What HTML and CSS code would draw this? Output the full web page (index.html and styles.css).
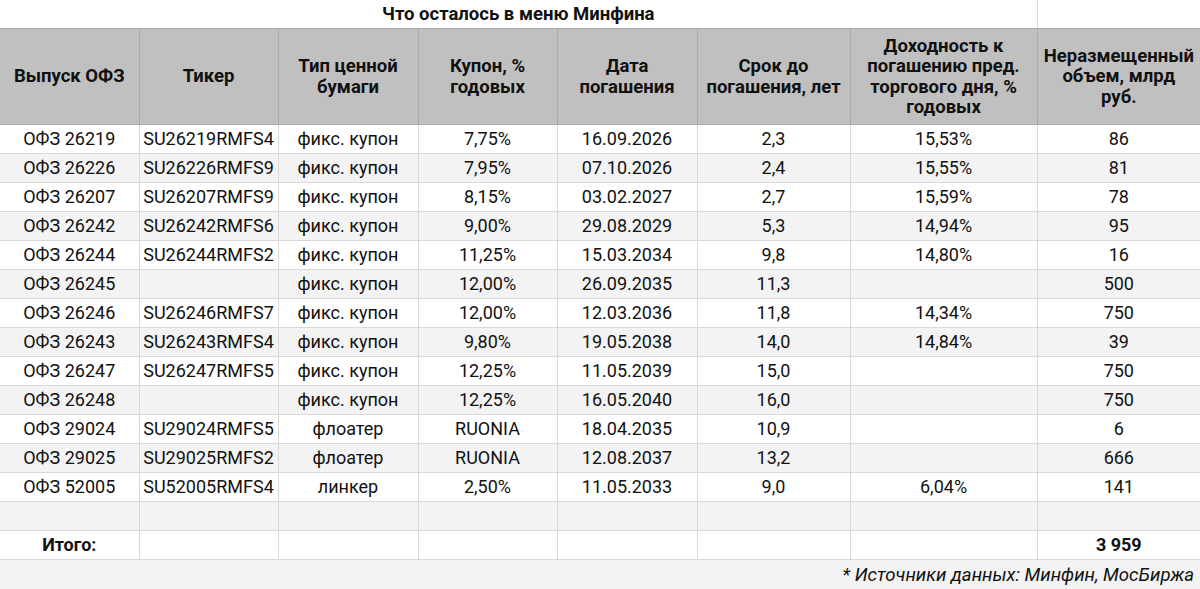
FILE: index.html
```html
<!DOCTYPE html>
<html lang="ru">
<head>
<meta charset="utf-8">
<title>Что осталось в меню Минфина</title>
<link rel="stylesheet" href="styles.css">
</head>
<body>
<table class="sheet">
  <colgroup>
    <col class="c1"><col class="c2"><col class="c3"><col class="c4">
    <col class="c5"><col class="c6"><col class="c7"><col class="c8">
  </colgroup>
  <tr class="title-row">
    <td colspan="7" class="title">Что осталось в меню Минфина</td>
    <td class="title-end"></td>
  </tr>
  <tr class="head">
    <th>Выпуск ОФЗ</th>
    <th>Тикер</th>
    <th>Тип ценной бумаги</th>
    <th>Купон, % годовых</th>
    <th>Дата погашения</th>
    <th>Срок до погашения, лет</th>
    <th>Доходность к погашению пред. торгового дня, % годовых</th>
    <th>Неразмещенный объем, млрд<br>руб.</th>
  </tr>
  <tr><td>ОФЗ 26219</td><td>SU26219RMFS4</td><td>фикс. купон</td><td>7,75%</td><td>16.09.2026</td><td>2,3</td><td>15,53%</td><td>86</td></tr>
  <tr class="alt"><td>ОФЗ 26226</td><td>SU26226RMFS9</td><td>фикс. купон</td><td>7,95%</td><td>07.10.2026</td><td>2,4</td><td>15,55%</td><td>81</td></tr>
  <tr><td>ОФЗ 26207</td><td>SU26207RMFS9</td><td>фикс. купон</td><td>8,15%</td><td>03.02.2027</td><td>2,7</td><td>15,59%</td><td>78</td></tr>
  <tr class="alt"><td>ОФЗ 26242</td><td>SU26242RMFS6</td><td>фикс. купон</td><td>9,00%</td><td>29.08.2029</td><td>5,3</td><td>14,94%</td><td>95</td></tr>
  <tr><td>ОФЗ 26244</td><td>SU26244RMFS2</td><td>фикс. купон</td><td>11,25%</td><td>15.03.2034</td><td>9,8</td><td>14,80%</td><td>16</td></tr>
  <tr class="alt"><td>ОФЗ 26245</td><td></td><td>фикс. купон</td><td>12,00%</td><td>26.09.2035</td><td>11,3</td><td></td><td>500</td></tr>
  <tr><td>ОФЗ 26246</td><td>SU26246RMFS7</td><td>фикс. купон</td><td>12,00%</td><td>12.03.2036</td><td>11,8</td><td>14,34%</td><td>750</td></tr>
  <tr class="alt"><td>ОФЗ 26243</td><td>SU26243RMFS4</td><td>фикс. купон</td><td>9,80%</td><td>19.05.2038</td><td>14,0</td><td>14,84%</td><td>39</td></tr>
  <tr><td>ОФЗ 26247</td><td>SU26247RMFS5</td><td>фикс. купон</td><td>12,25%</td><td>11.05.2039</td><td>15,0</td><td></td><td>750</td></tr>
  <tr class="alt"><td>ОФЗ 26248</td><td></td><td>фикс. купон</td><td>12,25%</td><td>16.05.2040</td><td>16,0</td><td></td><td>750</td></tr>
  <tr><td>ОФЗ 29024</td><td>SU29024RMFS5</td><td>флоатер</td><td>RUONIA</td><td>18.04.2035</td><td>10,9</td><td></td><td>6</td></tr>
  <tr class="alt"><td>ОФЗ 29025</td><td>SU29025RMFS2</td><td>флоатер</td><td>RUONIA</td><td>12.08.2037</td><td>13,2</td><td></td><td>666</td></tr>
  <tr><td>ОФЗ 52005</td><td>SU52005RMFS4</td><td>линкер</td><td>2,50%</td><td>11.05.2033</td><td>9,0</td><td>6,04%</td><td>141</td></tr>
  <tr class="alt"><td></td><td></td><td></td><td></td><td></td><td></td><td></td><td></td></tr>
  <tr class="total"><td>Итого:</td><td></td><td></td><td></td><td></td><td></td><td></td><td>3 959</td></tr>
  <tr class="alt note-row"><td colspan="8" class="note">* Источники данных: Минфин, МосБиржа</td></tr>
</table>
</body>
</html>
```

FILE: styles.css
```css
html, body {
  margin: 0;
  padding: 0;
  background: #ffffff;
}

.sheet {
  width: 1200px;
  border-collapse: collapse;
  table-layout: fixed;
  font-family: Roboto, "Liberation Sans", Arial, sans-serif;
  font-size: 18px;
  color: #111;
}

.c1 { width: 139px; }
.c2 { width: 139px; }
.c3 { width: 140px; }
.c4 { width: 139px; }
.c5 { width: 140px; }
.c6 { width: 153px; }
.c7 { width: 187px; }
.c8 { width: 163px; }

.sheet td,
.sheet th {
  border: 1px solid #d9d9d9;
  padding: 0 2px;
  height: 28px;
  text-align: center;
  vertical-align: middle;
  white-space: nowrap;
  overflow: visible;
  line-height: 20px;
}

.sheet tr:first-child td { border-top: none; }
.sheet td:first-child,
.sheet th:first-child { border-left: none; }
.sheet td:last-child,
.sheet th:last-child { border-right: none; }

.sheet .title-row td {
  height: 28px;
  border-bottom: 1px solid #ababab;
}

.sheet .title {
  font-weight: bold;
  font-size: 18.5px;
  border-right: 1px solid #d9d9d9;
}

.sheet .head th {
  background: #c0c0c0;
  border: 1px solid #ababab;
  font-weight: bold;
  font-size: 18.5px;
  line-height: 20.5px;
  height: 95px;
  white-space: normal;
  padding: 0 3px;
  color: #111;
}

.sheet .head th:first-child { border-left: none; }
.sheet .head th:last-child { border-right: none; }

.sheet .alt td { background: #f3f3f3; }

.sheet .total td { font-weight: bold; }

.sheet .note-row td { height: 29px; }

.sheet .note {
  text-align: right;
  font-style: italic;
  font-size: 18.6px;
  padding-right: 6px;
}
```
